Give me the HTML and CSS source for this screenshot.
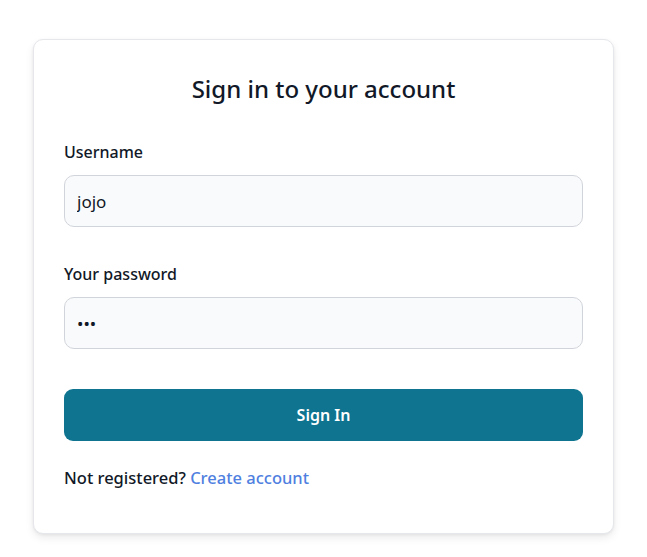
FILE: index.html
```html
<!DOCTYPE html>
<html lang="en">
<head>
<meta charset="utf-8">
<title>Sign in</title>
<link rel="stylesheet" href="styles.css">
</head>
<body>
<main class="page">
  <form class="card">
    <h1 class="title">Sign in to your account</h1>
    <div class="field">
      <label class="label" for="username">Username</label>
      <input class="input" id="username" type="text" value="jojo">
    </div>
    <div class="field">
      <label class="label" for="password">Your password</label>
      <input class="input" id="password" type="password" value="abc">
    </div>
    <button class="btn" type="button">Sign In</button>
    <p class="foot">Not registered? <a class="link" href="#">Create account</a></p>
  </form>
</main>
</body>
</html>
```
FILE: styles.css
```css
* { box-sizing: border-box; }
html, body { margin: 0; padding: 0; background: #ffffff; }
body {
  font-family: "Noto Sans", "Open Sans", "Liberation Sans", sans-serif;
  color: #111827;
}
.page {
  padding: 39px 33px 20px;
}
.card {
  border: 1px solid #e5e7eb;
  border-radius: 10px;
  box-shadow: 0 4px 8px rgba(0,0,0,0.08), 0 1px 3px rgba(0,0,0,0.06);
  padding: 33px 30px 43px;
  background: #fff;
}
.title {
  margin: 0 0 35px;
  text-align: center;
  font-size: 24px;
  line-height: 32px;
  font-weight: 500;
  color: #111827;
}
.field { margin-bottom: 35px; }
.field + .field { margin-bottom: 40px; }
.label {
  display: block;
  font-size: 16px;
  line-height: 24px;
  font-weight: 500;
  margin-bottom: 11px;
}
.input {
  display: block;
  width: 100%;
  height: 52px;
  border: 1px solid #d1d5db;
  border-radius: 10px;
  background: #f9fafb;
  padding: 0 12px;
  font-family: inherit;
  font-size: 17px;
  color: #111827;
}
.btn {
  display: block;
  width: 100%;
  height: 52px;
  border: 0;
  border-radius: 9px;
  background: #0e7490;
  color: #fff;
  font-family: inherit;
  font-size: 16px;
  font-weight: 600;
  margin: 0 0 25px;
}
.foot {
  margin: 0;
  font-size: 16.5px;
  line-height: 24px;
  font-weight: 500;
}
.link { color: #4f7fe0; text-decoration: none; }
```
